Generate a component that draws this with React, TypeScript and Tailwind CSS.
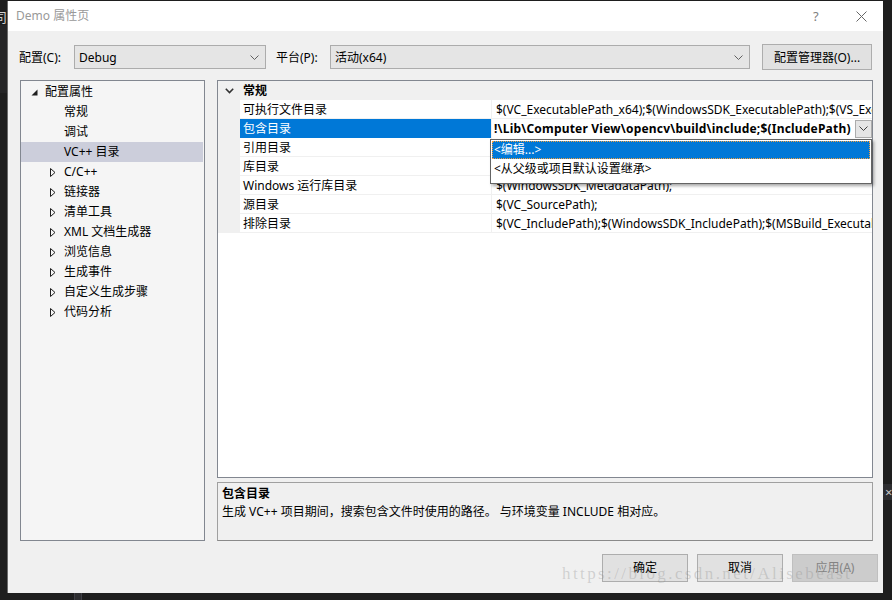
import React from "react";

function Chevron({ color = "#606060" }: { color?: string }) {
  return (
    <svg width="9" height="5" viewBox="0 0 9 5">
      <path d="M0.5 0.5 L4.5 4.5 L8.5 0.5" fill="none" stroke={color} strokeWidth="1" />
    </svg>
  );
}

function Combo({ w, text }: { w: string; text: string }) {
  return (
    <div className={`${w} h-[24px] bg-[#e5e5e5] border border-[#acacac] flex items-center pl-[4px] pr-[6px]`}>
      <span className="flex-1 pt-[1px] text-[12px] leading-[16px] text-black">{text}</span>
      <Chevron />
    </div>
  );
}

const tree: { label: string; kind: "root" | "leaf" | "collapsed"; selected?: boolean }[] = [
  { label: "配置属性", kind: "root" },
  { label: "常规", kind: "leaf" },
  { label: "调试", kind: "leaf" },
  { label: "VC++ 目录", kind: "leaf", selected: true },
  { label: "C/C++", kind: "collapsed" },
  { label: "链接器", kind: "collapsed" },
  { label: "清单工具", kind: "collapsed" },
  { label: "XML 文档生成器", kind: "collapsed" },
  { label: "浏览信息", kind: "collapsed" },
  { label: "生成事件", kind: "collapsed" },
  { label: "自定义生成步骤", kind: "collapsed" },
  { label: "代码分析", kind: "collapsed" },
];

const rows: { name: string; value: string; selected?: boolean }[] = [
  { name: "可执行文件目录", value: "$(VC_ExecutablePath_x64);$(WindowsSDK_ExecutablePath);$(VS_ExecutablePath);$(MSBuild_ExecutablePath);" },
  { name: "包含目录", value: "!\\Lib\\Computer View\\opencv\\build\\include;$(IncludePath)", selected: true },
  { name: "引用目录", value: "$(VC_ReferencesPath_x64);" },
  { name: "库目录", value: "$(VC_LibraryPath_x64);$(WindowsSDK_LibraryPath_x64);" },
  { name: "Windows 运行库目录", value: "$(WindowsSDK_MetadataPath);" },
  { name: "源目录", value: "$(VC_SourcePath);" },
  { name: "排除目录", value: "$(VC_IncludePath);$(WindowsSDK_IncludePath);$(MSBuild_ExecutablePath);$(VC_LibraryPath_x64);" },
];

export default function App() {
  return (
    <div className="w-[892px] h-[600px] bg-[#1e1e1e] relative overflow-hidden flex font-['Noto_Sans','Noto_Sans_CJK_SC',sans-serif] text-[12px]">
      {/* left VS strip */}
      <div className="w-[7px] h-full bg-[#1e1e1e] flex flex-col overflow-hidden">
        <div className="h-[9px]" />
        <div className="h-[16px] flex justify-end overflow-hidden">
          <span className="text-[#d0d0d0] text-[13px] leading-[16px] whitespace-nowrap">司</span>
        </div>
        <div className="h-[68px] bg-[#252526]" />
      </div>

      {/* dialog */}
      <div className="w-[876px] h-[592px] mt-[1px] bg-[#f0f0f0] flex flex-col border-l border-[#6b6b6b]">
        {/* title bar */}
        <div className="h-[30px] bg-white flex items-center pl-[8px]">
          <span className="text-[#999999] text-[12px] leading-[16px] flex-1">Demo 属性页</span>
          <span className="text-[#808080] text-[13px] leading-[16px] w-[10px] mr-[33px]">?</span>
          <svg width="11" height="11" viewBox="0 0 11 11" className="mr-[16px]">
            <path d="M0.5 0.5 L10.5 10.5 M10.5 0.5 L0.5 10.5" stroke="#666" strokeWidth="1" />
          </svg>
        </div>

        {/* config row */}
        <div className="mt-[13px] h-[26px] flex items-center pl-[11px]">
          <span className="w-[55px] pt-[1px] text-[12px] leading-[16px] text-black">配置(C):</span>
          <Combo w="w-[192px]" text="Debug" />
          <span className="w-[54px] ml-[10px] pt-[1px] text-[12px] leading-[16px] text-black">平台(P):</span>
          <Combo w="w-[420px]" text="活动(x64)" />
          <div className="ml-[12px] w-[110px] h-[26px] pt-[1px] bg-[#e1e1e1] border border-[#adadad] flex items-center justify-center text-[12px] leading-[16px] text-black">
            配置管理器(O)...
          </div>
        </div>

        {/* main area */}
        <div className="mt-[10px] flex pl-[12px] gap-[12px]">
          {/* tree */}
          <div className="w-[185px] h-[461px] bg-[#f5f5f5] border border-[#828790] pt-[1px] flex flex-col">
            {tree.map((t) => (
              <div
                key={t.label}
                className={`h-[20px] flex items-center mr-[1px] ${t.selected ? "bg-[#cccedb]" : ""}`}
              >
                {t.kind === "root" ? (
                  <>
                    <svg width="7" height="7" viewBox="0 0 7 7" className="ml-[10px] mr-[7px]">
                      <path d="M6.5 0.5 L6.5 6.5 L0.5 6.5 Z" fill="#1e1e1e" />
                    </svg>
                    <span className="text-[12px] leading-[16px] text-black">{t.label}</span>
                  </>
                ) : t.kind === "collapsed" ? (
                  <>
                    <svg width="6" height="9" viewBox="0 0 6 9" className="ml-[29px] mr-[8px]">
                      <path d="M0.5 0.5 L5 4.5 L0.5 8.5 Z" fill="none" stroke="#1e1e1e" strokeWidth="1" />
                    </svg>
                    <span className="text-[12px] leading-[16px] text-black">{t.label}</span>
                  </>
                ) : (
                  <span className="ml-[43px] text-[12px] leading-[16px] text-black">{t.label}</span>
                )}
              </div>
            ))}
          </div>

          {/* right panels */}
          <div className="w-[656px] flex flex-col gap-[4px]">
            {/* property grid */}
            <div className="h-[398px] bg-white border border-[#828790] relative">
              <div className="h-[19px] bg-[#f0f0f0] flex items-center">
                <div className="w-[22px] flex justify-center">
                  <svg width="9" height="6" viewBox="0 0 9 6">
                    <path d="M0.8 0.8 L4.5 4.5 L8.2 0.8" fill="none" stroke="#333" strokeWidth="1.6" />
                  </svg>
                </div>
                <span className="ml-[3px] font-bold text-[12px] leading-[16px] text-black">常规</span>
              </div>
              {rows.map((r) => (
                <div key={r.name} className="h-[19px] flex">
                  <div className="w-[22px] bg-[#f0f0f0]" />
                  <div
                    className={`w-[252px] border-r border-[#f0f0f0] flex items-center pl-[3px] pt-[1px] ${
                      r.selected ? "bg-[#0078d7] text-white" : "border-b text-black"
                    }`}
                  >
                    <span className="text-[12px] leading-[16px] whitespace-nowrap">{r.name}</span>
                  </div>
                  {r.selected ? (
                    <div className="flex-1 flex items-center overflow-hidden pl-[2px]">
                      <span className="flex-1 pt-[1px] text-[12px] leading-[16px] font-bold tracking-[0.2px] text-black whitespace-nowrap overflow-hidden">
                        {r.value}
                      </span>
                      <div className="w-[17px] h-[18px] bg-[#e5e5e5] border border-[#acacac] flex items-center justify-center">
                        <Chevron color="#404040" />
                      </div>
                    </div>
                  ) : (
                    <div className="flex-1 flex items-center overflow-hidden pl-[4px] pt-[1px] border-b border-[#f0f0f0]">
                      <span className="text-[12px] leading-[16px] text-black whitespace-nowrap">{r.value}</span>
                    </div>
                  )}
                </div>
              ))}

              {/* dropdown list */}
              <div className="absolute left-[272px] top-[58px] w-[382px] h-[45px] bg-white border border-[#646464] shadow-[2px_2px_3px_rgba(0,0,0,0.35)] pt-[1px] px-[1px]">
                <div className="h-[18px] bg-[#0078d7] border border-dotted border-[#f0a040] flex items-center pl-[1px]">
                  <span className="text-[12px] leading-[16px] text-white">&lt;编辑...&gt;</span>
                </div>
                <div className="h-[19px] flex items-center pl-[2px]">
                  <span className="text-[12px] leading-[16px] text-black">&lt;从父级或项目默认设置继承&gt;</span>
                </div>
              </div>
            </div>

            {/* description */}
            <div className="h-[59px] bg-[#f0f0f0] border border-[#a0a0a0] border-b-[#8a8a8a] pl-[4px] pt-[2px]">
              <div className="h-[18px] flex items-center font-bold text-[12px] leading-[16px] text-black">包含目录</div>
              <div className="h-[18px] flex items-center text-[12px] leading-[16px] text-black">
                生成 VC++ 项目期间，搜索包含文件时使用的路径。 与环境变量 INCLUDE 相对应。
              </div>
            </div>
          </div>
        </div>

        {/* buttons */}
        <div className="mt-[13px] flex justify-end gap-[9px] pr-[5px]">
          <div className="w-[86px] h-[28px] bg-[#e1e1e1] border border-[#adadad] flex items-center justify-center text-[12px] leading-[16px] text-black">确定</div>
          <div className="w-[86px] h-[28px] bg-[#e1e1e1] border border-[#adadad] flex items-center justify-center text-[12px] leading-[16px] text-black">取消</div>
          <div className="w-[86px] h-[28px] bg-[#cccccc] border border-[#bfbfbf] flex items-center justify-center text-[12px] leading-[16px] text-[#838383]">应用(A)</div>
        </div>
      </div>

      {/* right VS strip */}
      <div className="w-[9px] h-full bg-[#1e1e1e] flex flex-col">
        <div className="h-[484px]" />
        <div className="h-[16px] bg-[#2d2d30] flex items-center overflow-hidden">
          <span className="text-[#c8c8c8] text-[13px] leading-[14px] ml-[2px]">×</span>
        </div>
      </div>

      {/* bottom strip detail */}
      <div className="absolute left-[74px] top-[593px] w-[8px] h-[7px] bg-[#2d2d30] border-x border-[#3f3f46]" />

      {/* watermark */}
      <div className="absolute left-[562px] top-[564px] text-[17px] leading-[20px] tracking-[2.4px] font-['Liberation_Serif',serif] text-[rgba(140,140,140,0.32)] whitespace-nowrap pointer-events-none">
        https://blog.csdn.net/Alisebeast
      </div>
    </div>
  );
}
